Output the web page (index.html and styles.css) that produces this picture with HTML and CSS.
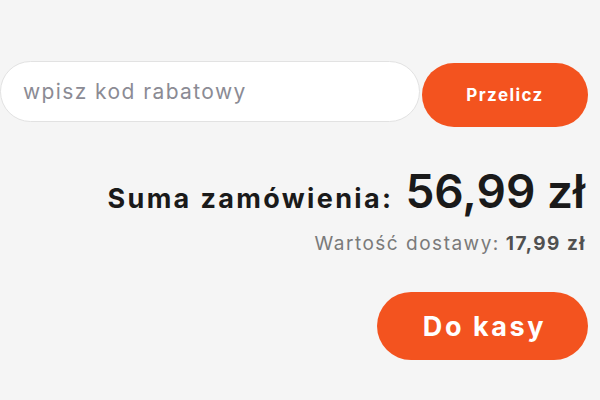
FILE: index.html
```html
<!DOCTYPE html>
<html lang="pl">
<head>
<meta charset="utf-8">
<link rel="stylesheet" href="styles.css">
</head>
<body>
<div class="cart">
  <div class="coupon">
    <div class="coupon-input">wpisz kod rabatowy</div>
    <button class="btn btn-small">Przelicz</button>
  </div>
  <div class="total">
    <span class="total-label">Suma zamówienia:</span>
    <span class="total-value">56,99 zł</span>
  </div>
  <div class="shipping">
    <span class="shipping-label">Wartość dostawy:</span>
    <span class="shipping-value">17,99 zł</span>
  </div>
  <div class="checkout">
    <button class="btn btn-big">Do kasy</button>
  </div>
</div>
</body>
</html>
```

FILE: styles.css
```css
html, body {
  margin: 0;
  padding: 0;
  background: #f5f5f5;
  width: 600px;
  height: 400px;
  overflow: hidden;
  font-family: Inter, "Noto Sans", sans-serif;
}
.cart {
  display: flex;
  flex-direction: column;
  align-items: flex-end;
  padding: 61px 12px 0 0;
}
.coupon {
  display: flex;
  align-items: flex-start;
  gap: 2px;
  width: 588px;
}
.coupon-input {
  box-sizing: border-box;
  width: 420px;
  height: 61px;
  background: #fff;
  border: 1px solid #e2e2e2;
  border-radius: 31px;
  display: flex;
  align-items: center;
  padding-left: 22px;
  font-size: 21px;
  letter-spacing: 1.4px;
  color: #8b8b94;
}
.btn {
  border: 0;
  padding: 0;
  background: #f3531f;
  color: #fff;
  font-family: Inter, "Noto Sans", sans-serif;
  font-weight: 700;
  cursor: pointer;
}
.btn-small {
  margin-top: 2px;
  width: 166px;
  height: 64px;
  border-radius: 32px;
  font-size: 17px;
  letter-spacing: 1.4px;
}
.total {
  display: flex;
  align-items: baseline;
  gap: 12px;
  margin-top: 38px;
  margin-right: 3px;
  color: #1a1a1a;
}
.total-label {
  font-size: 27px;
  line-height: 32px;
  font-weight: 700;
  letter-spacing: 2.35px;
}
.total-value {
  font-size: 46px;
  font-weight: 600;
  line-height: 52px;
}
.shipping {
  display: flex;
  align-items: baseline;
  gap: 6px;
  margin-top: 15px;
  margin-right: 2px;
  font-size: 19px;
  line-height: 24px;
  letter-spacing: 1.5px;
}
.shipping-label {
  color: #7a7a7a;
}
.shipping-value {
  color: #505050;
  font-weight: 700;
}
.checkout {
  margin-top: 36px;
}
.btn-big {
  width: 211px;
  height: 68px;
  border-radius: 34px;
  font-size: 27px;
  letter-spacing: 2.6px;
  padding-left: 4px;
}
```
